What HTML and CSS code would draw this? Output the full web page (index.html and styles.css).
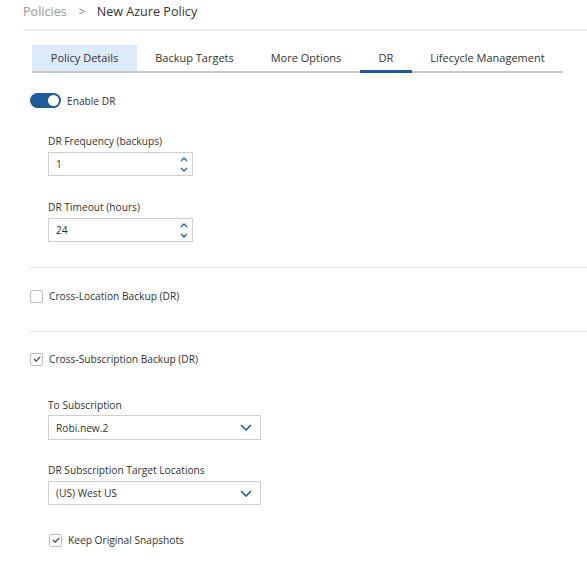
FILE: index.html
```html
<!DOCTYPE html>
<html>
<head>
<meta charset="utf-8">
<link rel="stylesheet" href="styles.css">
</head>
<body>
<div class="page">
  <div class="crumbs">
    <span class="crumb-link">Policies</span>
    <span class="crumb-sep">&gt;</span>
    <span class="crumb-current">New Azure Policy</span>
  </div>
  <div class="tabs">
    <div class="tab tab-1">Policy Details</div>
    <div class="tab tab-2">Backup Targets</div>
    <div class="tab tab-3">More Options</div>
    <div class="tab tab-4 tab-active">DR</div>
    <div class="tab tab-5">Lifecycle Management</div>
  </div>

  <div class="content">
    <div class="toggle-row">
      <span class="toggle"><span class="knob"></span></span>
      <span class="toggle-label">Enable DR</span>
    </div>

    <div class="field field-1">
      <div class="label">DR Frequency (backups)</div>
      <div class="input num">
        <span>1</span>
        <span class="spin">
          <svg width="8" height="5" viewBox="0 0 8 5"><path d="M1 4 L4 1 L7 4" fill="none" stroke="#2b62a3" stroke-width="1.4"/></svg>
          <svg width="8" height="5" viewBox="0 0 8 5"><path d="M1 1 L4 4 L7 1" fill="none" stroke="#2b62a3" stroke-width="1.4"/></svg>
        </span>
      </div>
    </div>

    <div class="field field-2">
      <div class="label">DR Timeout (hours)</div>
      <div class="input num">
        <span>24</span>
        <span class="spin">
          <svg width="8" height="5" viewBox="0 0 8 5"><path d="M1 4 L4 1 L7 4" fill="none" stroke="#2b62a3" stroke-width="1.4"/></svg>
          <svg width="8" height="5" viewBox="0 0 8 5"><path d="M1 1 L4 4 L7 1" fill="none" stroke="#2b62a3" stroke-width="1.4"/></svg>
        </span>
      </div>
    </div>

    <div class="divider div-1"></div>

    <div class="check-row row-1">
      <span class="checkbox"></span>
      <span class="check-label">Cross-Location Backup (DR)</span>
    </div>

    <div class="divider div-2"></div>

    <div class="check-row row-2">
      <span class="checkbox">
        <svg width="10" height="10" viewBox="0 0 10 10"><path d="M2 5 L4.2 7.2 L8.2 2.8" fill="none" stroke="#444" stroke-width="1.2"/></svg>
      </span>
      <span class="check-label">Cross-Subscription Backup (DR)</span>
    </div>

    <div class="sub">
      <div class="field field-3">
        <div class="label">To Subscription</div>
        <div class="input select sel-1">
          <span>Robi.new.2</span>
          <svg width="12" height="7" viewBox="0 0 12 7"><path d="M1 1 L6 6 L11 1" fill="none" stroke="#1f5c99" stroke-width="1.6"/></svg>
        </div>
      </div>

      <div class="field field-4">
        <div class="label">DR Subscription Target Locations</div>
        <div class="input select">
          <span>(US) West US</span>
          <svg width="12" height="7" viewBox="0 0 12 7"><path d="M1 1 L6 6 L11 1" fill="none" stroke="#1f5c99" stroke-width="1.6"/></svg>
        </div>
      </div>

      <div class="check-row row-3">
        <span class="checkbox">
          <svg width="10" height="10" viewBox="0 0 10 10"><path d="M2 5 L4.2 7.2 L8.2 2.8" fill="none" stroke="#444" stroke-width="1.2"/></svg>
        </span>
        <span class="check-label">Keep Original Snapshots</span>
      </div>
    </div>
  </div>
</div>
</body>
</html>
```
FILE: styles.css
```css
* { box-sizing: border-box; }
html, body { margin: 0; padding: 0; background: #fff; }
body {
  font-family: "Open Sans", "Liberation Sans", sans-serif;
  color: #333;
  width: 587px;
  height: 562px;
  overflow: hidden;
}
.crumbs {
  margin-left: 23px;
  height: 31px;
  line-height: 24px;
  font-size: 12.6px;
  display: flex;
  align-items: flex-start;
  border-bottom: 2px solid #eeeeee;
}
.crumb-link { color: #9a9a9a; }
.crumb-sep { color: #8a8a8a; margin: 0 11px 0 12px; font-size: 12px; }
.crumb-current { color: #333; }

.tabs {
  margin: 14px 0 0 32px;
  width: 531px;
  display: flex;
  border-bottom: 2px solid #c8c8c8;
  height: 28px;
}
.tab {
  flex: none;
  height: 26px;
  line-height: 26px;
  font-size: 11px;
  text-align: center;
  color: #333;
  white-space: nowrap;
}
.tab-1 { background: #dcebfa; width: 105px; }
.tab-2 { width: 115px; }
.tab-3 { width: 108px; }
.tab-4 { width: 52px; }
.tab-5 { width: 151px; }
.tab-active { border-bottom: 3px solid #1b5a9c; height: 28px; margin-bottom: -2px; }

.content { padding-left: 30px; }
.toggle-row { margin-top: 20px; display: flex; align-items: center; height: 15px; }
.toggle {
  width: 31px; height: 15px; border-radius: 8px; background: #1c5c9b;
  position: relative; display: inline-block;
}
.knob {
  position: absolute; right: 2px; top: 2px; width: 11px; height: 11px;
  border-radius: 50%; background: #fff;
}
.toggle-label { margin-left: 6px; font-size: 10.2px; }

.field { margin-left: 18px; }
.label { font-size: 10.2px; line-height: 16px; color: #333; }
.input {
  border: 1px solid #cfcfcf;
  height: 24px;
  display: flex;
  align-items: center;
  justify-content: space-between;
  font-size: 10.2px;
  color: #333;
}
.num { width: 145px; margin-top: 3px; padding: 0 4px 0 7px; }
.spin { display: flex; flex-direction: column; gap: 5px; }
.spin svg { display: block; }
.field-1 { margin-top: 25px; }
.field-2 { margin-top: 23px; }

.divider { height: 1px; background: #e4e4e4; }
.div-1 { margin-top: 25px; }
.div-2 { margin-top: 27px; }

.check-row { display: flex; align-items: center; height: 16px; }
.row-1 { margin-top: 20px; }
.row-2 { margin-top: 19px; }
.checkbox {
  width: 13px; height: 13px; border: 1px solid #bdbdbd; border-radius: 2px;
  display: inline-flex; align-items: center; justify-content: center; background: #fff;
}
.checkbox svg { display: block; }
.check-label { margin-left: 6px; font-size: 10.2px; }

.field-3 { margin-top: 30px; }
.field-4 { margin-top: 22px; }
.select { width: 213px; padding: 0 8px 0 7px; margin-top: 3px; }
.sel-1 { height: 25px; margin-top: 2px; }
.row-3 { margin-top: 27px; margin-left: 19px; }
```
